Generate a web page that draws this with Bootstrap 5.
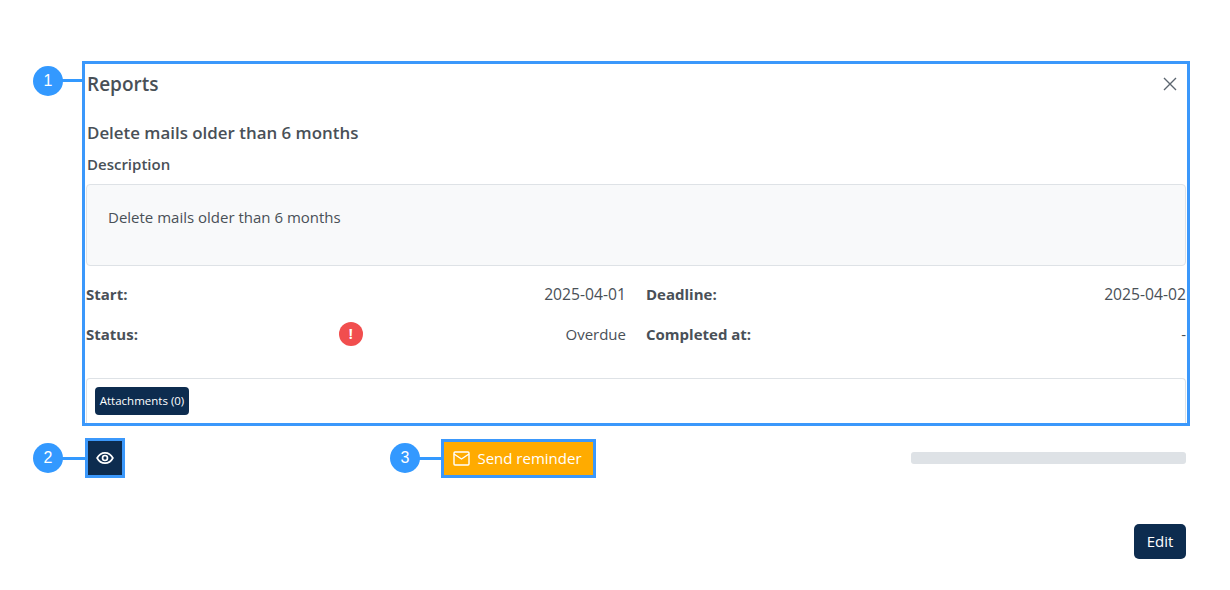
<!DOCTYPE html>
<html lang="en">
<head>
<meta charset="utf-8">
<title>Reports</title>
<link href="https://cdn.jsdelivr.net/npm/bootstrap@5.3.0/dist/css/bootstrap.min.css" rel="stylesheet">
<style>
body{font-family:"Open Sans","Noto Sans","Liberation Sans",sans-serif;color:#495057;background:#fff;font-size:15px;overflow:hidden}
.stage{position:relative;width:1230px;height:590px;padding:65px 44px 0 86px}
.head-line{height:38px;padding-left:1px}
.head-title{font-size:19px;font-weight:600;margin:0;color:#495057}
.close-x{width:16px;height:16px;color:#5c6670;margin-right:8px}
.task-title{font-size:16.900px;font-weight:600;margin:18px 0 0 1px;line-height:24px;height:24px}
.desc-label{font-size:15px;font-weight:600;margin:9px 0 0 1px;line-height:21px;height:21px}
.desc-box{background:#f8f9fa;border:1px solid #dee2e6;border-radius:4px;height:82px;margin-top:9px;padding:22px 21px;line-height:21px}
.facts{margin-top:8px;column-gap:20px;display:grid;grid-template-columns:540px 540px}
.fact{height:40px;line-height:40px}
.fact b{font-weight:700}
.date-val{font-size:15.700px}
.warn{width:24px;height:24px;border-radius:50%;background:#f14e4e;color:#fff;font-weight:700;font-size:14px;line-height:24px;text-align:center;margin-right:2px}
.att-box{border:1px solid #dee2e6;border-bottom:0;border-radius:4px 4px 0 0;height:46px;margin-top:24px;padding:8px}
.btn-navy{background:#0d2c4f;color:#fff;border:0;border-radius:4px}
.btn-navy:hover{background:#0d2c4f;color:#fff}
.att-btn{font-size:11.500px;font-weight:500;height:28px;width:94px;padding:0;white-space:nowrap}
.tool-row{margin-top:17px;height:34px;padding-left:2px}
.eye-btn{width:34px;height:34px;padding:0;border-radius:0}
.send-btn{background:#ffab00;color:#fff;border:0;border-radius:0;font-size:15px;height:33px;width:149px;padding:0 2px 0 0;margin-left:322px;margin-top:1px;gap:7px}
.send-btn:hover{background:#ffab00;color:#fff}
.ph-bar{width:275px;height:12px;background:#dee2e6;border-radius:3px}
.edit-btn{font-size:15px;width:52px;height:35px;padding:0;border-radius:5px;margin-top:49px}
.hl{position:absolute;border:3px solid #3b98fb;pointer-events:none}
.hl-1{left:82px;top:61px;width:1108px;height:365px}
.hl-2{left:85px;top:438px;width:40px;height:40px}
.hl-3{left:441px;top:439px;width:155px;height:39px}
.pin{position:absolute;border-radius:50%;background:#3399ff;color:#fff;font-size:16px;width:30px;height:30px;line-height:30px;text-align:center;font-family:"Liberation Sans",sans-serif}
.wire{position:absolute;height:3px;background:#3399ff}
</style>
</head>
<body>
<div class="stage">
  <div class="head-line d-flex align-items-center justify-content-between">
    <h5 class="head-title">Reports</h5>
    <svg class="close-x" viewBox="0 0 16 16" fill="none" stroke="currentColor" stroke-width="1.4"><path d="M2 2l12 12M14 2L2 14"/></svg>
  </div>
  <div class="task-title">Delete mails older than 6 months</div>
  <div class="desc-label">Description</div>
  <div class="desc-box">Delete mails older than 6 months</div>
  <div class="facts">
    <div class="fact d-flex justify-content-between"><b>Start:</b><span class="date-val">2025-04-01</span></div>
    <div class="fact d-flex justify-content-between"><b>Deadline:</b><span class="date-val">2025-04-02</span></div>
    <div class="fact d-flex justify-content-between align-items-center"><b>Status:</b><span class="warn">!</span><span>Overdue</span></div>
    <div class="fact d-flex justify-content-between"><b>Completed at:</b><span>-</span></div>
  </div>
  <div class="att-box"><button class="btn btn-navy att-btn" type="button">Attachments (0)</button></div>
  <div class="tool-row d-flex align-items-center">
    <button class="btn btn-navy eye-btn d-flex align-items-center justify-content-center" type="button" aria-label="View">
      <svg width="18" height="18" viewBox="0 0 16 16" fill="none" stroke="currentColor" stroke-width="1.5"><path d="M1 8c1.6-3 4-4.6 7-4.6S13.400 5 15 8c-1.600 3-4 4.600-7 4.600S2.600 11 1 8z"/><circle cx="8" cy="8" r="2.200"/></svg>
    </button>
    <button class="btn send-btn d-flex align-items-center justify-content-center" type="button">
      <svg width="17" height="15" viewBox="0 0 17 15" fill="none" stroke="currentColor" stroke-width="1.4"><rect x="1" y="1" width="15" height="13" rx="1"/><path d="M1 3l7.500 5L16 3"/></svg>
      Send reminder
    </button>
    <div class="ph-bar ms-auto"></div>
  </div>
  <div class="d-flex justify-content-end"><button class="btn btn-navy edit-btn" type="button">Edit</button></div>

  <div class="hl hl-1"></div>
  <div class="hl hl-2"></div>
  <div class="hl hl-3"></div>
  <div class="wire" style="left:60px;top:79px;width:24px"></div>
  <div class="wire" style="left:60px;top:457px;width:27px"></div>
  <div class="wire" style="left:418px;top:457px;width:25px"></div>
  <div class="pin" style="left:33px;top:66px">1</div>
  <div class="pin" style="left:33px;top:443px">2</div>
  <div class="pin" style="left:390px;top:443px">3</div>
</div>
<script src="https://cdn.jsdelivr.net/npm/bootstrap@5.3.0/dist/js/bootstrap.bundle.min.js"></script>
</body>
</html>
